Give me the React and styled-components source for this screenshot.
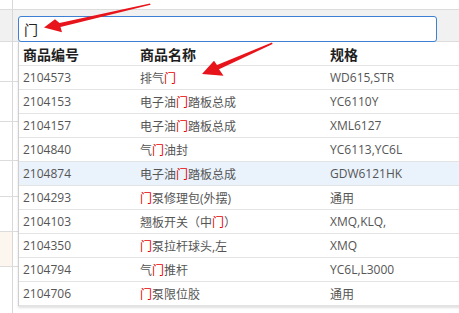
import styled, { createGlobalStyle } from 'styled-components';

const GlobalStyle = createGlobalStyle`
  html, body {
    margin: 0;
    padding: 0;
    background: #ffffff;
  }
  body {
    font-family: "Open Sans", "Noto Sans CJK SC", sans-serif;
  }
`;

const sheetRows = [
  { height: 10, band: false },
  { height: 32, band: true },
  { height: 40 },
  { height: 40 },
  { height: 39 },
  { height: 36 },
  { height: 35 },
  { height: 35, tint: true },
  { height: 46 },
];

const items = [
  { code: '2104573', name: ['排气', '门', ''], spec: 'WD615,STR' },
  { code: '2104153', name: ['电子油', '门', '踏板总成'], spec: 'YC6110Y' },
  { code: '2104157', name: ['电子油', '门', '踏板总成'], spec: 'XML6127' },
  { code: '2104840', name: ['气', '门', '油封'], spec: 'YC6113,YC6L' },
  { code: '2104874', name: ['电子油', '门', '踏板总成'], spec: 'GDW6121HK', active: true },
  { code: '2104293', name: ['', '门', '泵修理包(外摆)'], spec: '通用' },
  { code: '2104103', name: ['翘板开关（中', '门', '）'], spec: 'XMQ,KLQ,' },
  { code: '2104350', name: ['', '门', '泵拉杆球头,左'], spec: 'XMQ' },
  { code: '2104794', name: ['气', '门', '推杆'], spec: 'YC6L,L3000' },
  { code: '2104706', name: ['', '门', '泵限位胶'], spec: '通用' },
];

function App() {
  return (
    <Screen>
      <GlobalStyle />
      <Sheet>
        {sheetRows.map((r, i) => (
          <SheetRow key={i} $h={r.height} $band={r.band} $last={i === sheetRows.length - 1}>
            <RowHead $band={r.band} $tint={r.tint} />
            <SheetCell />
          </SheetRow>
        ))}
      </Sheet>

      <Dropdown>
        <SearchBox>门</SearchBox>
        <ResultTable>
          <HeadRow>
            <HeadCell>商品编号</HeadCell>
            <HeadCell>商品名称</HeadCell>
            <HeadCell>规格</HeadCell>
          </HeadRow>
          {items.map((it) => (
            <ItemRow key={it.code} $active={it.active}>
              <Cell>{it.code}</Cell>
              <Cell>
                {it.name[0]}
                <Hit>{it.name[1]}</Hit>
                {it.name[2]}
              </Cell>
              <Cell>{it.spec}</Cell>
            </ItemRow>
          ))}
        </ResultTable>
      </Dropdown>

      <Marks viewBox="0 0 459 313" width="459" height="313">
        <polygon points="150,3.4 59.5,23 55,19.3 44,27.5 62,32.3 60.5,27 150.6,4.8" fill="#e8141b" />
        <polygon points="272,42.4 217,65 214,60.8 202,74 223.5,75.8 219,69.2 272.6,44" fill="#e8141b" />
      </Marks>
    </Screen>
  );
}

export default App;

const Screen = styled.div`
  position: relative;
  width: 459px;
  height: 313px;
  overflow: hidden;
  background: #ffffff;
`;

const Sheet = styled.div`
  display: flex;
  flex-direction: column;
  width: 100%;
  height: 100%;
`;

const SheetRow = styled.div`
  display: flex;
  box-sizing: border-box;
  height: ${(p) => p.$h}px;
  flex: ${(p) => (p.$last ? '1' : 'none')};
  border-bottom: ${(p) => (p.$last ? 'none' : '1px solid #dcdcdc')};
  background: ${(p) => (p.$band ? '#f1f1f1' : '#ffffff')};
`;

const RowHead = styled.div`
  width: 12px;
  flex: none;
  border-right: 1px solid #d8d8d8;
  background: ${(p) => (p.$tint ? '#fdf6ee' : 'transparent')};
`;

const SheetCell = styled.div`
  flex: 1;
`;

const Dropdown = styled.div`
  position: absolute;
  left: 18px;
  top: 16px;
  width: 460px;
  display: flex;
  flex-direction: column;
`;

const SearchBox = styled.div`
  box-sizing: border-box;
  width: 419px;
  height: 26px;
  padding-left: 5px;
  display: flex;
  align-items: center;
  border: 1px solid #3f7fd4;
  border-radius: 3px;
  background: #ffffff;
  font-family: "Noto Sans CJK SC", sans-serif;
  font-size: 14px;
  color: #222;
`;

const ResultTable = styled.div`
  display: flex;
  flex-direction: column;
  background: #ffffff;
  border-left: 1px solid #cfcfcf;
  box-shadow: 0 2px 2px rgba(0, 0, 0, 0.12);
`;

const HeadRow = styled.div`
  display: grid;
  grid-template-columns: 117px 190px 1fr;
  box-sizing: border-box;
  height: 24px;
  align-items: center;
  padding-left: 4px;
  border-bottom: 1px solid #e3e3e3;
`;

const HeadCell = styled.div`
  font-family: "Noto Sans CJK SC", sans-serif;
  font-weight: 700;
  font-size: 14px;
  color: #1e1e1e;
  white-space: nowrap;
`;

const ItemRow = styled.div`
  display: grid;
  grid-template-columns: 117px 190px 1fr;
  box-sizing: border-box;
  height: 24px;
  align-items: center;
  padding-left: 4px;
  border-bottom: 1px solid #e3e3e3;
  background: ${(p) => (p.$active ? '#eaf2fc' : '#ffffff')};
`;

const Cell = styled.div`
  font-size: 12px;
  color: #555555;
  white-space: nowrap;
`;

const Hit = styled.span`
  color: #e60000;
`;

const Marks = styled.svg`
  position: absolute;
  left: 0;
  top: 0;
  pointer-events: none;
`;
